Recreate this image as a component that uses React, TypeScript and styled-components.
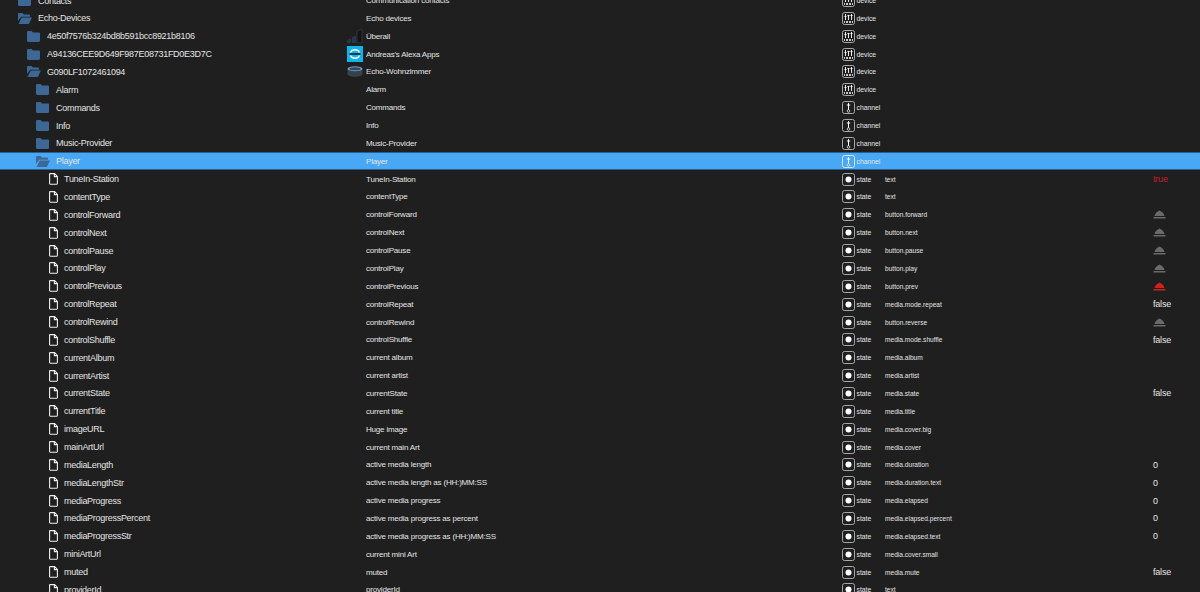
import React from "react";
import styled, { createGlobalStyle } from "styled-components";

const Global = createGlobalStyle`
  html, body { margin: 0; padding: 0; background: #1f1f1f; overflow: hidden; }
`;

const Page = styled.div`
  width: 1200px;
  height: 592px;
  overflow: hidden;
  background: #1f1f1f;
  color: #e4e4e4;
  font-family: "Liberation Sans", Arial, sans-serif;
`;

const Tree = styled.div`
  margin-top: -8.4px;
  display: flex;
  flex-direction: column;
`;

const Row = styled.div<{ $selected?: boolean }>`
  height: 17.87px;
  flex: none;
  display: grid;
  grid-template-columns: 347px 495px 43px 268px 1fr;
  align-items: center;
  white-space: nowrap;
  background: ${(p) => (p.$selected ? "#49a8f5" : "transparent")};
  box-shadow: ${(p) => (p.$selected ? "inset 0 1px 0 #2a5f8c, inset 0 -1px 0 #2a5f8c" : "none")};
`;

const NameCell = styled.div<{ $level: number; $file?: boolean }>`
  display: flex;
  align-items: center;
  padding-left: ${(p) => 18 + p.$level * 9 + (p.$file ? 4 : 0)}px;
  gap: ${(p) => (p.$file ? 6 : 7)}px;
  font-size: 9px;
  letter-spacing: -0.28px;
`;

const TitleCell = styled.div`
  display: flex;
  align-items: center;
  font-size: 8px;
  letter-spacing: -0.19px;
`;

const Thumb = styled.div`
  width: 19px;
  height: 17px;
  flex: none;
  display: flex;
  align-items: center;
`;

const TypeCell = styled.div`
  display: flex;
  align-items: center;
  gap: 1.5px;
  font-size: 6.8px;
`;

const RoleCell = styled.div`
  font-size: 6.6px;
`;

const ValueCell = styled.div<{ $red?: boolean }>`
  display: flex;
  align-items: center;
  font-size: 9px;
  letter-spacing: -0.2px;
  color: ${(p) => (p.$red ? "#c0202a" : "#e4e4e4")};
`;

const Icon = styled.svg`
  flex: none;
  display: block;
`;

const OpenIcon = styled(Icon)`
  margin-right: -1px;
`;

const FolderClosed = () => (
  <Icon width="13" height="11" viewBox="0 0 13 11">
    <path d="M0 1.200C0 .5.5 0 1.200 0h3.400l1.400 1.600h5.800c.7 0 1.200.5 1.200 1.200v7c0 .7-.5 1.200-1.200 1.200H1.200C.5 11 0 10.500 0 9.800z" fill="#3d6896" />
  </Icon>
);

const FolderOpen = () => (
  <OpenIcon width="14" height="11" viewBox="0 0 14 11">
    <path d="M0 1.200C0 .5.5 0 1.200 0h3.300l1.400 1.500h5c.7 0 1.200.5 1.200 1.200v1H3.200L0 8z" fill="#3d6896" />
    <path d="M3.700 4.600H14L10.800 11H.5z" fill="#3d6896" />
  </OpenIcon>
);

const FileIcon = () => (
  <Icon width="9" height="12" viewBox="0 0 9 12">
    <path d="M1 .6h4.600L8.400 3.400v7.200c0 .3-.2.6-.6.6H1.200c-.3 0-.6-.3-.6-.6V1.200C.6.900.7.600 1 .6zM5.400.8v2.800h2.800" fill="none" stroke="#efefef" strokeWidth="1.100" />
  </Icon>
);

const DeviceIcon = () => (
  <Icon width="13" height="13" viewBox="0 0 13 13">
    <rect x=".5" y=".5" width="12" height="12" rx="2" fill="none" stroke="#a8a8a8" />
    <path d="M3.500 2v6M6.500 3v5M9.500 2v6" stroke="#e8e8e8" />
    <path d="M2.500 4.500h2M5.500 3.500h2M8.500 3.500h2" stroke="#fff" />
    <path d="M2 9h9v2H2z" fill="#e8e8e8" opacity=".85" />
    <path d="M3.500 9v2M6.500 9v2M9.500 9v2" stroke="#1f1f1f" />
  </Icon>
);

const ChannelIcon = ({ light }: { light?: boolean }) => (
  <Icon width="13" height="13" viewBox="0 0 13 13">
    <rect x=".5" y=".5" width="12" height="12" rx="2" fill="none" stroke={light ? "#cfe6fb" : "#a8a8a8"} />
    <path d="M6.500 2v7" stroke="#fff" />
    <path d="M4.800 4h3.400" stroke="#fff" />
    <circle cx="6.500" cy="10" r="1.300" fill="none" stroke="#e0e0e0" strokeWidth=".8" />
  </Icon>
);

const StateIcon = () => (
  <Icon width="13" height="13" viewBox="0 0 13 13">
    <rect x=".5" y=".5" width="12" height="12" rx="2" fill="none" stroke="#a8a8a8" />
    <circle cx="6.500" cy="6.500" r="3" fill="#fff" />
  </Icon>
);

const BellButton = ({ red }: { red?: boolean }) => (
  <Icon width="13" height="9" viewBox="0 0 13 9">
    <path d="M1.500 6C2 3.500 4 1.500 6.500 .5 9 1.500 11 3.500 11.500 6z" fill={red ? "#d0201f" : "#6a6a6a"} />
    <rect x="0.500" y="7" width="12" height="1.500" fill={red ? "#d0201f" : "#6a6a6a"} />
  </Icon>
);

const BarsThumb = () => (
  <Icon width="16" height="15" viewBox="0 0 16 15">
    <path d="M0 11l4-1.500V14H0z" fill="#2a3440" />
    <path d="M5 8l4-1.500V14H5z" fill="#24384c" />
    <path d="M10 2l5-1.500V14h-5z" fill="#131416" stroke="#3f444a" strokeWidth=".6" />
  </Icon>
);

const AlexaThumb = () => (
  <Icon width="16" height="16" viewBox="0 0 16 16">
    <rect width="16" height="16" fill="#12b4ec" />
    <path d="M3.500 6.500A5 5 0 0 1 12.500 6.500M12.500 9.500A5 5 0 0 1 3.500 9.500" fill="none" stroke="#fff" strokeWidth="1.400" />
    <rect x="2.500" y="7" width="11" height="2" fill="#143a50" />
  </Icon>
);

const EchoThumb = () => (
  <Icon width="16" height="11" viewBox="0 0 16 11">
    <path d="M.5 3v5c0 1.500 3 2.700 7.500 2.700s7.500-1.200 7.500-2.700V3z" fill="#3a4048" />
    <ellipse cx="8" cy="2.700" rx="7.500" ry="2.500" fill="#6a9cc4" />
    <ellipse cx="8" cy="2.700" rx="5.500" ry="1.500" fill="#34465a" />
  </Icon>
);

type Kind = "closed" | "open" | "file";
type TypeName = "device" | "channel" | "state";
type Item = {
  name: string;
  title: string;
  level: number;
  kind: Kind;
  type: TypeName;
  role?: string;
  value?: string;
  thumb?: "bars" | "alexa" | "echo";
  selected?: boolean;
};

const s = (name: string, title: string, role: string, value?: string): Item => ({
  name, title, role, value, level: 3, kind: "file", type: "state",
});

const items: Item[] = [
  { name: "Contacts", title: "Communication contacts", level: 0, kind: "closed", type: "device" },
  { name: "Echo-Devices", title: "Echo devices", level: 0, kind: "open", type: "device" },
  { name: "4e50f7576b324bd8b591bcc8921b8106", title: "Überall", level: 1, kind: "closed", type: "device", thumb: "bars" },
  { name: "A94136CEE9D649F987E08731FD0E3D7C", title: "Andreas's Alexa Apps", level: 1, kind: "closed", type: "device", thumb: "alexa" },
  { name: "G090LF1072461094", title: "Echo-Wohnzimmer", level: 1, kind: "open", type: "device", thumb: "echo" },
  { name: "Alarm", title: "Alarm", level: 2, kind: "closed", type: "device" },
  { name: "Commands", title: "Commands", level: 2, kind: "closed", type: "channel" },
  { name: "Info", title: "Info", level: 2, kind: "closed", type: "channel" },
  { name: "Music-Provider", title: "Music-Provider", level: 2, kind: "closed", type: "channel" },
  { name: "Player", title: "Player", level: 2, kind: "open", type: "channel", selected: true },
  s("TuneIn-Station", "TuneIn-Station", "text", "true"),
  s("contentType", "contentType", "text"),
  s("controlForward", "controlForward", "button.forward", "bell"),
  s("controlNext", "controlNext", "button.next", "bell"),
  s("controlPause", "controlPause", "button.pause", "bell"),
  s("controlPlay", "controlPlay", "button.play", "bell"),
  s("controlPrevious", "controlPrevious", "button.prev", "bellred"),
  s("controlRepeat", "controlRepeat", "media.mode.repeat", "false"),
  s("controlRewind", "controlRewind", "button.reverse", "bell"),
  s("controlShuffle", "controlShuffle", "media.mode.shuffle", "false"),
  s("currentAlbum", "current album", "media.album"),
  s("currentArtist", "current artist", "media.artist"),
  s("currentState", "currentState", "media.state", "false"),
  s("currentTitle", "current title", "media.title"),
  s("imageURL", "Huge image", "media.cover.big"),
  s("mainArtUrl", "current main Art", "media.cover"),
  s("mediaLength", "active media length", "media.duration", "0"),
  s("mediaLengthStr", "active media length as (HH:)MM:SS", "media.duration.text", "0"),
  s("mediaProgress", "active media progress", "media.elapsed", "0"),
  s("mediaProgressPercent", "active media progress as percent", "media.elapsed.percent", "0"),
  s("mediaProgressStr", "active media progress as (HH:)MM:SS", "media.elapsed.text", "0"),
  s("miniArtUrl", "current mini Art", "media.cover.small"),
  s("muted", "muted", "media.mute", "false"),
  s("providerId", "providerId", "text"),
];

const renderValue = (v?: string) => {
  if (v === "bell") return <BellButton />;
  if (v === "bellred") return <BellButton red />;
  return v;
};

export default function App() {
  return (
    <Page>
      <Global />
      <Tree>
        {items.map((it) => (
          <Row key={it.name} $selected={it.selected}>
            <NameCell $level={it.level} $file={it.kind === "file"}>
              {it.kind === "closed" && <FolderClosed />}
              {it.kind === "open" && <FolderOpen />}
              {it.kind === "file" && <FileIcon />}
              <span>{it.name}</span>
            </NameCell>
            <TitleCell>
              <Thumb>
                {it.thumb === "bars" && <BarsThumb />}
                {it.thumb === "alexa" && <AlexaThumb />}
                {it.thumb === "echo" && <EchoThumb />}
              </Thumb>
              <span>{it.title}</span>
            </TitleCell>
            <TypeCell>
              {it.type === "device" && <DeviceIcon />}
              {it.type === "channel" && <ChannelIcon light={it.selected} />}
              {it.type === "state" && <StateIcon />}
              <span>{it.type}</span>
            </TypeCell>
            <RoleCell>{it.role}</RoleCell>
            <ValueCell $red={it.value === "true"}>{renderValue(it.value)}</ValueCell>
          </Row>
        ))}
      </Tree>
    </Page>
  );
}
